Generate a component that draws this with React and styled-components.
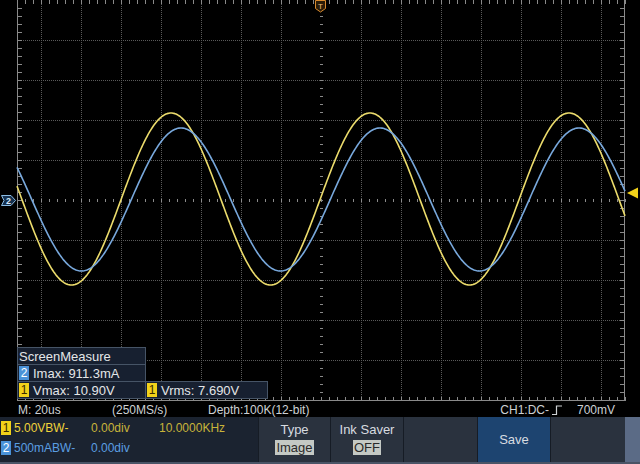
import React from 'react';
import styled, { createGlobalStyle } from 'styled-components';

const GlobalStyle = createGlobalStyle`
  html, body {
    margin: 0;
    padding: 0;
    background: #000;
  }
  body {
    font-family: "Liberation Sans", Arial, sans-serif;
  }
`;

const W = 640;
const PLOT_L = 17;
const PLOT_R = 625;
const PLOT_H = 401;
const CX = 321;
const CY = 200;

const Screen = styled.div`
  width: 640px;
  height: 464px;
  display: flex;
  flex-direction: column;
  background: #000;
  overflow: hidden;
`;

const Display = styled.div`
  position: relative;
  height: 402px;
  flex: none;
`;

const MeasurePanel = styled.div`
  position: absolute;
  left: 17px;
  top: 347px;
  display: grid;
  grid-template-columns: 128px 122px;
  grid-auto-rows: 17px;
  font-size: 13px;
  color: #e4e6e8;
`;

const MeasureCell = styled.div`
  grid-column: ${(p) => (p.$wide ? 'span 1' : 'auto')};
  display: flex;
  align-items: center;
  gap: 4px;
  padding-left: 1px;
  background: #172030;
  border: 1px solid #465466;
  margin: 0 -1px -1px 0;
  white-space: nowrap;
`;

const Spacer = styled.div``;

const Badge = styled.span`
  display: inline-flex;
  align-items: center;
  justify-content: center;
  width: 10px;
  height: 14px;
  font-size: 12px;
  line-height: 14px;
  background: ${(p) => (p.$ch === 1 ? '#f2d21a' : '#4a92d8')};
  color: ${(p) => (p.$ch === 1 ? '#3a2a00' : '#ffffff')};
  flex: none;
`;

const StatusBar = styled.div`
  height: 15px;
  flex: none;
  display: flex;
  align-items: center;
  padding: 0 25px 0 18px;
  font-size: 12px;
  color: #cdd1d4;
  white-space: nowrap;
`;

const StatusItem = styled.span`
  width: ${(p) => p.$w || 'auto'};
  flex: none;
`;

const StatusRight = styled.span`
  margin-left: auto;
  display: flex;
  align-items: center;
  gap: 2px;
`;

const MenuBar = styled.div`
  height: 47px;
  flex: none;
  display: grid;
  grid-template-columns: 258px 72px 73px 74px 73px 75px 15px;
  background: #2a323e;
  border-bottom: 2px solid #4a5466;
  box-sizing: border-box;
`;

const ChannelInfo = styled.div`
  background: #1b2330;
  display: flex;
  flex-direction: column;
  gap: 6px;
  padding: 4px 0 0 1px;
  font-size: 12px;
`;

const ChannelRow = styled.div`
  display: flex;
  align-items: center;
  height: 14px;
  white-space: nowrap;
`;

const Field = styled.span`
  width: ${(p) => p.$w || 'auto'};
  color: ${(p) => p.$color};
  flex: none;
`;

const MenuButton = styled.div`
  display: flex;
  flex-direction: column;
  align-items: center;
  justify-content: ${(p) => (p.$single ? 'center' : 'flex-start')};
  gap: 3px;
  padding-top: ${(p) => (p.$single ? '0' : '5px')};
  border-left: 1px solid #161c25;
  background: ${(p) => (p.$active ? '#1d4470' : 'transparent')};
  color: #d8dce0;
  font-size: 13px;
  box-sizing: border-box;
`;

const MenuValue = styled.span`
  background: #c4c9c4;
  color: #2a2a2a;
  font-size: 13px;
  line-height: 15px;
  padding: 0 1px;
`;

const EdgeStrip = styled.div`
  background: #5b6b86;
`;

function wavePath(amp, center, peakX, period) {
  let d = '';
  for (let x = PLOT_L; x <= PLOT_R; x += 1) {
    const y = center - amp * Math.cos((2 * Math.PI * (x - peakX)) / period);
    d += (x === PLOT_L ? 'M' : 'L') + x + ' ' + y.toFixed(2) + ' ';
  }
  return d;
}

function Graticule() {
  const vLines = [];
  for (let x = 41; x <= 601; x += 40) {
    if (x !== CX) vLines.push(x);
  }
  const hLines = [];
  for (let y = 40; y <= 360; y += 40) {
    if (y !== CY) hLines.push(y);
  }
  const ticksX = [];
  for (let x = CX % 8; x <= PLOT_R; x += 8) {
    if (x > PLOT_L) ticksX.push(x);
  }
  const ticksY = [];
  for (let y = 8; y < PLOT_H; y += 8) ticksY.push(y);

  return (
    <g shapeRendering="crispEdges">
      {vLines.map((x) => (
        <line key={'v' + x} x1={x + 0.5} y1={0} x2={x + 0.5} y2={PLOT_H} stroke="#5a5a5a" strokeDasharray="1 1" />
      ))}
      {hLines.map((y) => (
        <line key={'h' + y} x1={PLOT_L} y1={y + 0.5} x2={PLOT_R} y2={y + 0.5} stroke="#5a5a5a" strokeDasharray="1 1" />
      ))}
      {ticksX.map((x) => (
        <g key={'tx' + x} stroke="#8a8a8a">
          <line x1={x + 0.5} y1={0} x2={x + 0.5} y2={4} />
          <line x1={x + 0.5} y1={PLOT_H - 4} x2={x + 0.5} y2={PLOT_H} />
          <line x1={x + 0.5} y1={CY - 1} x2={x + 0.5} y2={CY + 2} />
        </g>
      ))}
      {ticksY.map((y) => (
        <g key={'ty' + y} stroke="#8a8a8a">
          <line x1={PLOT_L} y1={y + 0.5} x2={PLOT_L + 5} y2={y + 0.5} />
          <line x1={PLOT_R - 5} y1={y + 0.5} x2={PLOT_R} y2={y + 0.5} />
          <line x1={CX - 1} y1={y + 0.5} x2={CX + 2} y2={y + 0.5} />
        </g>
      ))}
      <line x1={PLOT_L + 0.5} y1={0} x2={PLOT_L + 0.5} y2={PLOT_H} stroke="#8a8a8a" />
      <line x1={PLOT_R - 0.5} y1={0} x2={PLOT_R - 0.5} y2={PLOT_H} stroke="#8a8a8a" />
      <line x1={PLOT_L} y1={PLOT_H - 0.5} x2={PLOT_R} y2={PLOT_H - 0.5} stroke="#8a8a8a" />
    </g>
  );
}

function Markers() {
  return (
    <g>
      {/* trigger position */}
      <path d="M315.5 0.5 H325.5 V8.5 L320.5 12 L315.5 8.5 Z" fill="#2a1c08" stroke="#d98a2e" />
      <text x={320.5} y={8.5} fontSize="8" fill="#f0c080" textAnchor="middle" fontFamily="Liberation Sans, sans-serif">T</text>
      {/* ch2 ground */}
      <path d="M1.5 195.5 H11 L15.5 200.5 L11 205.5 H1.5 L4 200.5 Z" fill="#15304e" stroke="#8cbce4" />
      <text x={8.5} y={204} fontSize="9" fontWeight="bold" fill="#d6e8f8" textAnchor="middle" fontFamily="Liberation Sans, sans-serif">2</text>
      {/* trigger level */}
      <path d="M627 193 L638 187.5 L638 198.5 Z" fill="#f2d21a" />
    </g>
  );
}

function Scope() {
  return (
    <svg width={W} height={402} style={{ display: 'block' }}>
      <Graticule />
      <path d={wavePath(86, 199, 171, 199)} fill="none" stroke="#ecdc6c" strokeWidth="1.6" />
      <path d={wavePath(71.5, 199.5, 181, 199)} fill="none" stroke="#78a8dc" strokeWidth="1.6" />
      <Markers />
    </svg>
  );
}

function EdgeIcon() {
  return (
    <svg width="12" height="12" viewBox="0 0 12 12">
      <path d="M1 10.5 H5.5 V2 H11" fill="none" stroke="#cdd1d4" strokeWidth="1.2" />
    </svg>
  );
}

export default function App() {
  return (
    <>
      <GlobalStyle />
      <Screen>
        <Display>
          <Scope />
          <MeasurePanel>
            <MeasureCell>ScreenMeasure</MeasureCell>
            <Spacer />
            <MeasureCell>
              <Badge $ch={2}>2</Badge>Imax: 911.3mA
            </MeasureCell>
            <Spacer />
            <MeasureCell>
              <Badge $ch={1}>1</Badge>Vmax: 10.90V
            </MeasureCell>
            <MeasureCell>
              <Badge $ch={1}>1</Badge>Vrms: 7.690V
            </MeasureCell>
          </MeasurePanel>
        </Display>
        <StatusBar>
          <StatusItem $w="94px">M: 20us</StatusItem>
          <StatusItem $w="96px">(250MS/s)</StatusItem>
          <StatusItem>Depth:100K(12-bit)</StatusItem>
          <StatusRight>
            CH1:DC-<EdgeIcon />
            <span style={{ marginLeft: 12 }}>700mV</span>
          </StatusRight>
        </StatusBar>
        <MenuBar>
          <ChannelInfo>
            <ChannelRow>
              <Badge $ch={1}>1</Badge>
              <Field $w="77px" $color="#f0d43a" style={{ marginLeft: 3 }}>5.00VBW-</Field>
              <Field $w="68px" $color="#c8b43a">0.00div</Field>
              <Field $color="#c8b43a">10.0000KHz</Field>
            </ChannelRow>
            <ChannelRow>
              <Badge $ch={2}>2</Badge>
              <Field $w="77px" $color="#5a9ee2" style={{ marginLeft: 3 }}>500mABW-</Field>
              <Field $color="#5a9ee2">0.00div</Field>
            </ChannelRow>
          </ChannelInfo>
          <MenuButton>
            Type
            <MenuValue>Image</MenuValue>
          </MenuButton>
          <MenuButton>
            Ink Saver
            <MenuValue>OFF</MenuValue>
          </MenuButton>
          <MenuButton />
          <MenuButton $active $single>Save</MenuButton>
          <MenuButton />
          <EdgeStrip />
        </MenuBar>
      </Screen>
    </>
  );
}
